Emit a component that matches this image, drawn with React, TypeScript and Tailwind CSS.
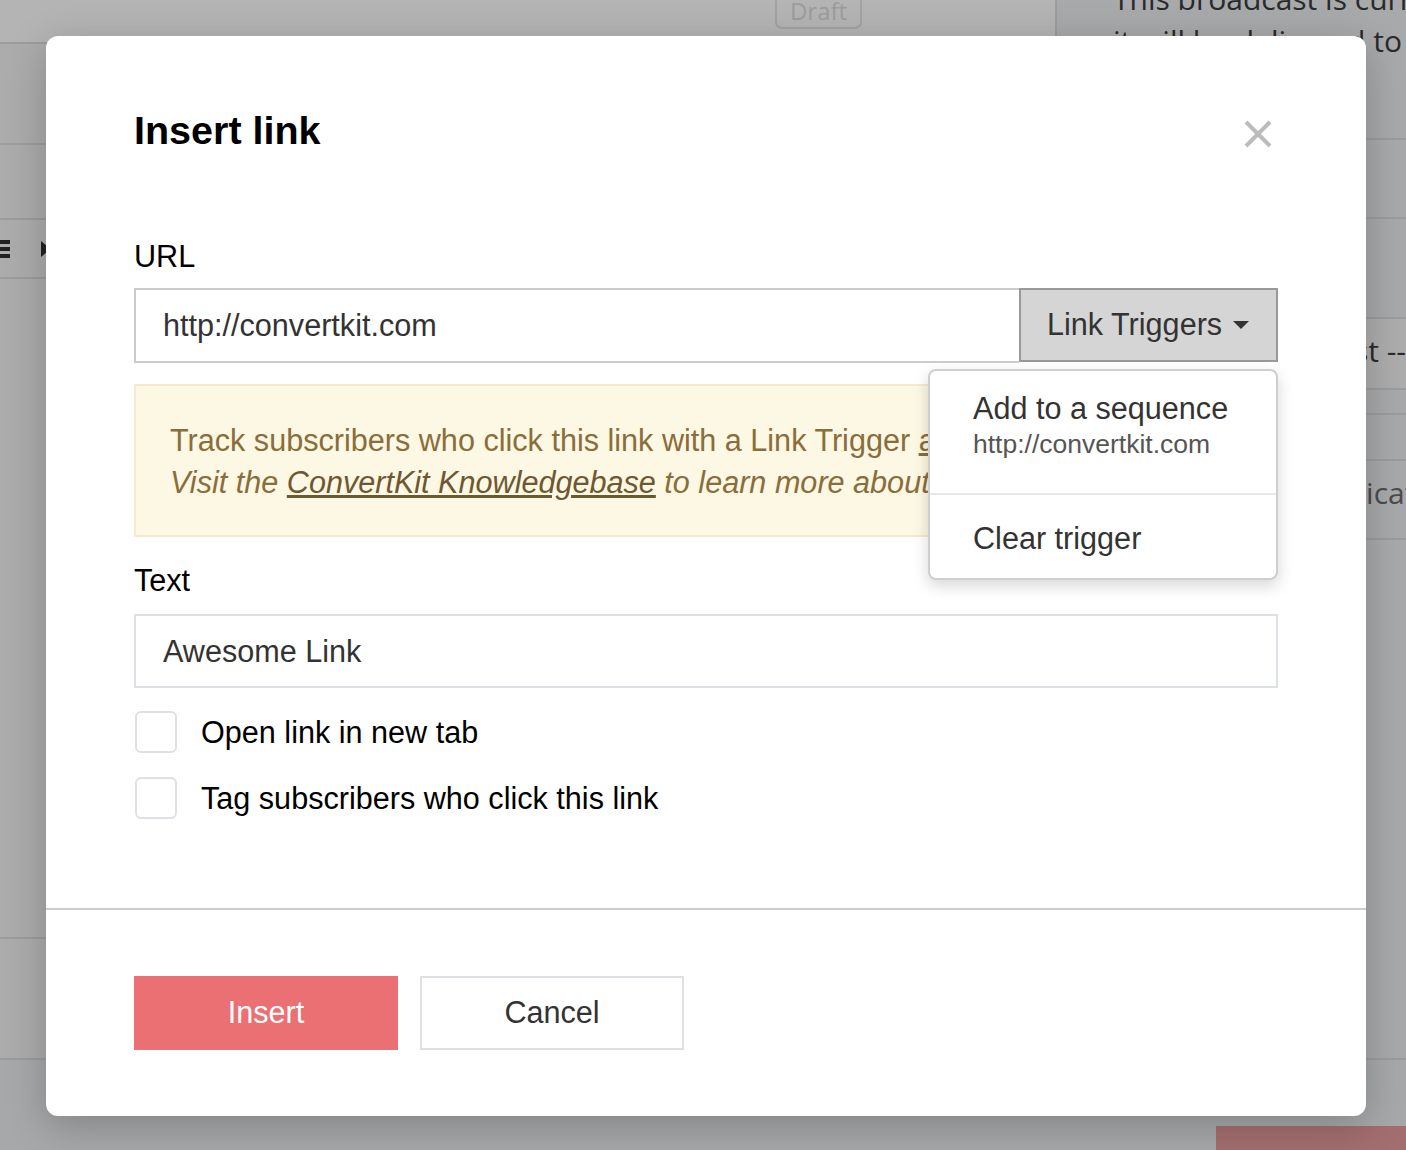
export default function App() {
  return (
    <div className="relative w-[1406px] h-[1150px] overflow-hidden bg-[#a7a8aa] font-['Open_Sans',sans-serif]">
      {/* Dimmed page behind the dialog */}
      <div className="flex h-full">
        <div className="w-[1055px] flex flex-col">
          <div className="h-[44px] bg-[#b4b4b4] border-b-2 border-[#9c9c9c] pl-[775px]">
            <div className="-mt-[6px] w-[87px] h-[35px] rounded-[7px] border-2 border-[#a2a2a2] text-[#9c9c9c] text-[24px] leading-[30px] text-center">
              Draft
            </div>
          </div>
          <div className="flex flex-col bg-[#acacac]">
            <div className="h-[101px] border-b-2 border-[#9c9c9c]" />
            <div className="h-[75px] border-b-2 border-[#9c9c9c]" />
            <div className="h-[59px] border-b-2 border-[#9c9c9c] flex items-center">
              <svg width="46" height="18" viewBox="0 0 46 18">
                <rect x="0" y="0" width="10" height="4" fill="#222" />
                <rect x="0" y="7" width="10" height="4" fill="#222" />
                <rect x="0" y="14" width="10" height="4" fill="#222" />
                <polygon points="41,1 47,6 47,12 41,17" fill="#222" />
              </svg>
            </div>
            <div className="h-[660px] border-b-2 border-[#9c9c9c]" />
            <div className="h-[121px] border-b-2 border-[#9c9c9c]" />
          </div>
        </div>

        <div className="flex-1 flex flex-col text-[30px] text-[#2a2a2a] whitespace-nowrap overflow-hidden">
          <div className="flex flex-col border-l-2 border-[#9c9c9c] bg-[#a8a9ab]">
            <div className="h-[140px] flex flex-col border-b-2 border-[#9c9c9c] pl-[56px] leading-[42px]">
              <div className="-mt-[22px]">This broadcast is currently scheduled,</div>
              <div>it will be delivered to</div>
            </div>
            <div className="h-[79px] border-b-2 border-[#9c9c9c]" />
            <div className="h-[100px] border-b-2 border-[#9c9c9c]" />
            <div className="h-[71px] border-b-2 border-[#9c9c9c] bg-[#adadae] flex items-center justify-end pb-[6px]">
              -- Select list --
            </div>
            <div className="h-[25px] border-b-2 border-[#9c9c9c]" />
            <div className="h-[46px] border-b-2 border-[#9c9c9c]" />
            <div className="h-[79px] border-b-2 border-[#9c9c9c] flex items-center pl-[243px] pb-[14px] text-[#4c4c4c]">
              Duplicate
            </div>
            <div className="h-[520px] border-b-2 border-[#9c9c9c]" />
          </div>
          <div className="flex-1 flex flex-col justify-end">
            <div className="ml-[161px] h-[24px] bg-[#a36e70]" />
          </div>
        </div>
      </div>

      {/* Dialog */}
      <div className="absolute left-[46px] top-[36px] w-[1320px] h-[1080px] bg-white rounded-[12px] shadow-[0_10px_40px_rgba(0,0,0,0.22)] flex flex-col font-['Liberation_Sans',Arial,sans-serif]">
        <div className="h-[872px] px-[88px] pt-[55px]">
          <div className="h-[80px] flex items-center justify-between">
            <h1 className="text-[39.5px] font-bold text-black leading-none">Insert link</h1>
            <button className="mt-[6px] mr-[6px]">
              <svg width="28" height="28" viewBox="0 0 28 28">
                <path d="M2 2 L26 26 M26 2 L2 26" stroke="#bcbcbc" strokeWidth="4" />
              </svg>
            </button>
          </div>

          <label className="block mt-[67px] text-[30.6px] leading-[36px] text-black">URL</label>
          <div className="relative mt-[14px] flex h-[75px]">
            <input
              readOnly
              value="http://convertkit.com"
              className="flex-1 min-w-0 border-2 border-r-0 border-[#cccccc] pl-[27px] text-[30.6px] text-[#333] outline-none"
            />
            <button className="w-[259px] h-[74px] bg-[#d5d5d5] border-2 border-[#999] pl-[26px] pr-[27px] flex items-center justify-between text-[30.6px] text-[#333]">
              <span>Link Triggers</span>
              <svg width="16" height="8" viewBox="0 0 16 8">
                <polygon points="0,0 16,0 8,8" fill="#333" />
              </svg>
            </button>

            {/* Link triggers menu */}
            <div className="absolute right-0 top-[81px] z-10 w-[350px] bg-white border-2 border-[#cfcfcf] rounded-[8px] shadow-[0_6px_16px_rgba(0,0,0,0.16)]">
              <div className="pl-[43px] pt-[19px] pb-[33px] border-b-2 border-[#e8e8e8]">
                <div className="text-[30.6px] leading-[36px] text-[#333]">Add to a sequence</div>
                <div className="mt-[2px] text-[26.5px] leading-[32px] text-[#555]">http://convertkit.com</div>
              </div>
              <div className="pl-[43px] pt-[25px] pb-[22px] text-[30.6px] leading-[36px] text-[#333]">Clear trigger</div>
            </div>
          </div>

          <div className="mt-[21px] h-[153px] bg-[#fcf8e3] border-2 border-[#f7eacb] px-[34px] pt-[33px] text-[30.6px] leading-[42px] text-[#8a6d3b] whitespace-nowrap overflow-hidden">
            <p>
              Track subscribers who click this link with a Link Trigger <a className="underline">automation</a>.
            </p>
            <p className="italic">
              Visit the <a className="underline text-[#6f5731]">ConvertKit Knowledgebase</a> to learn more about Link Triggers.
            </p>
          </div>

          <label className="block mt-[25px] text-[30.6px] leading-[36px] text-black">Text</label>
          <input
            readOnly
            value="Awesome Link"
            className="block mt-[16px] w-full h-[74px] border-2 border-[#dde1e6] pl-[27px] text-[30.6px] text-[#333] outline-none"
          />

          <div className="mt-[23px] flex items-center gap-[24px] leading-[36px]">
            <span className="ml-[1px] w-[42px] h-[42px] rounded-[6px] border-2 border-[#dde1e6]" />
            <span className="text-[30.6px] text-black">Open link in new tab</span>
          </div>
          <div className="mt-[24px] flex items-center gap-[24px] leading-[36px]">
            <span className="ml-[1px] w-[42px] h-[42px] rounded-[6px] border-2 border-[#dde1e6]" />
            <span className="text-[30.6px] text-black">Tag subscribers who click this link</span>
          </div>
        </div>

        <div className="border-t-2 border-[#cccccc] px-[88px] pt-[66px] flex gap-[22px]">
          <button className="w-[264px] h-[74px] bg-[#eb7073] text-white text-[30.6px]">Insert</button>
          <button className="w-[264px] h-[74px] border-2 border-[#dde1e6] text-[#333] text-[30.6px]">Cancel</button>
        </div>
      </div>
    </div>
  );
}
